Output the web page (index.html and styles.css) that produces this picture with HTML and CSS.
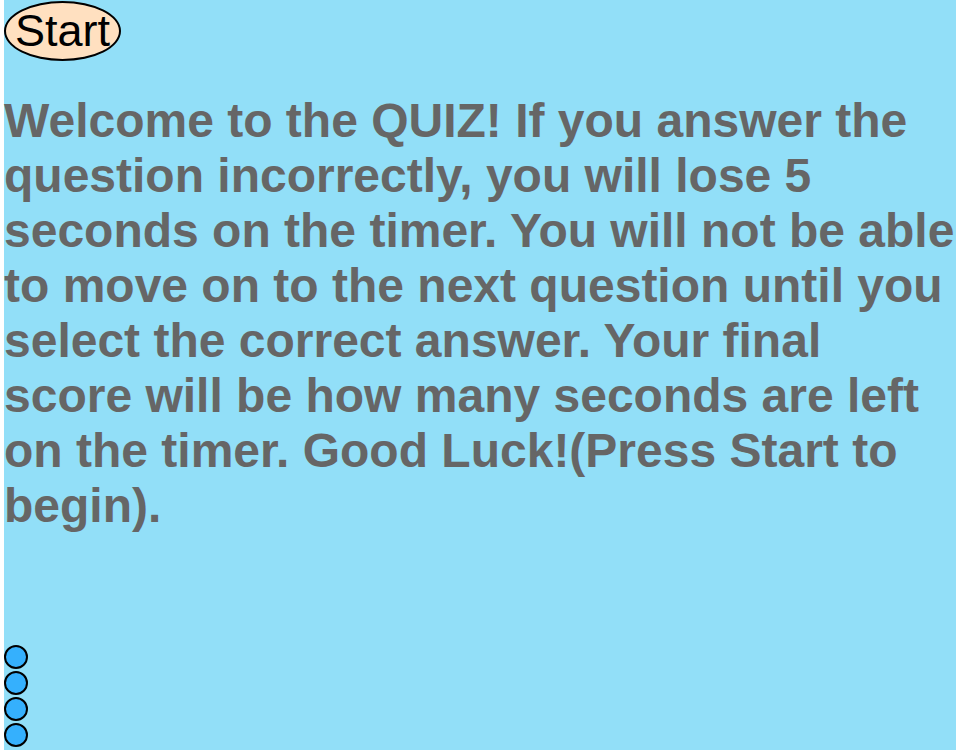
FILE: index.html
```html
<!DOCTYPE html>
<html>
<head>
<meta charset="utf-8">
<link rel="stylesheet" href="styles.css">
</head>
<body>
<div class="page">
  <div class="top">
    <button class="start">Start</button>
  </div>
  <h1 class="intro">Welcome to the QUIZ! If you answer the question incorrectly, you will lose 5 seconds on the timer. You will not be able to move on to the next question until you select the correct answer. Your final score will be how many seconds are left on the timer. Good Luck!(Press Start to begin).</h1>
  <div class="dots">
    <span class="dot"></span>
    <span class="dot"></span>
    <span class="dot"></span>
    <span class="dot"></span>
  </div>
</div>
</body>
</html>
```
FILE: styles.css
```css
html, body {
  margin: 0;
  padding: 0;
  background: #ffffff;
}
.page {
  margin-left: 4px;
  width: 952px;
  min-height: 760px;
  background: #92dff8;
  font-family: "Liberation Sans", Arial, sans-serif;
}
.top {
  padding-top: 1px;
}
.start {
  display: block;
  margin: 0;
  font-family: "Liberation Sans", Arial, sans-serif;
  font-size: 45px;
  line-height: 52px;
  padding: 2px 9px 2px 9px;
  background: #ffe0c0;
  color: #000;
  border: 2px solid #000;
  border-radius: 50%;
}
.intro {
  margin: 32px 0 0 0;
  font-size: 48px;
  font-weight: bold;
  color: #666666;
  line-height: 55px;
}
.dots {
  margin-top: 112px;
  display: flex;
  flex-direction: column;
  gap: 2px;
}
.dot {
  display: block;
  width: 20px;
  height: 20px;
  border: 2px solid #000;
  border-radius: 50%;
  background: #35b0fd;
}
```
